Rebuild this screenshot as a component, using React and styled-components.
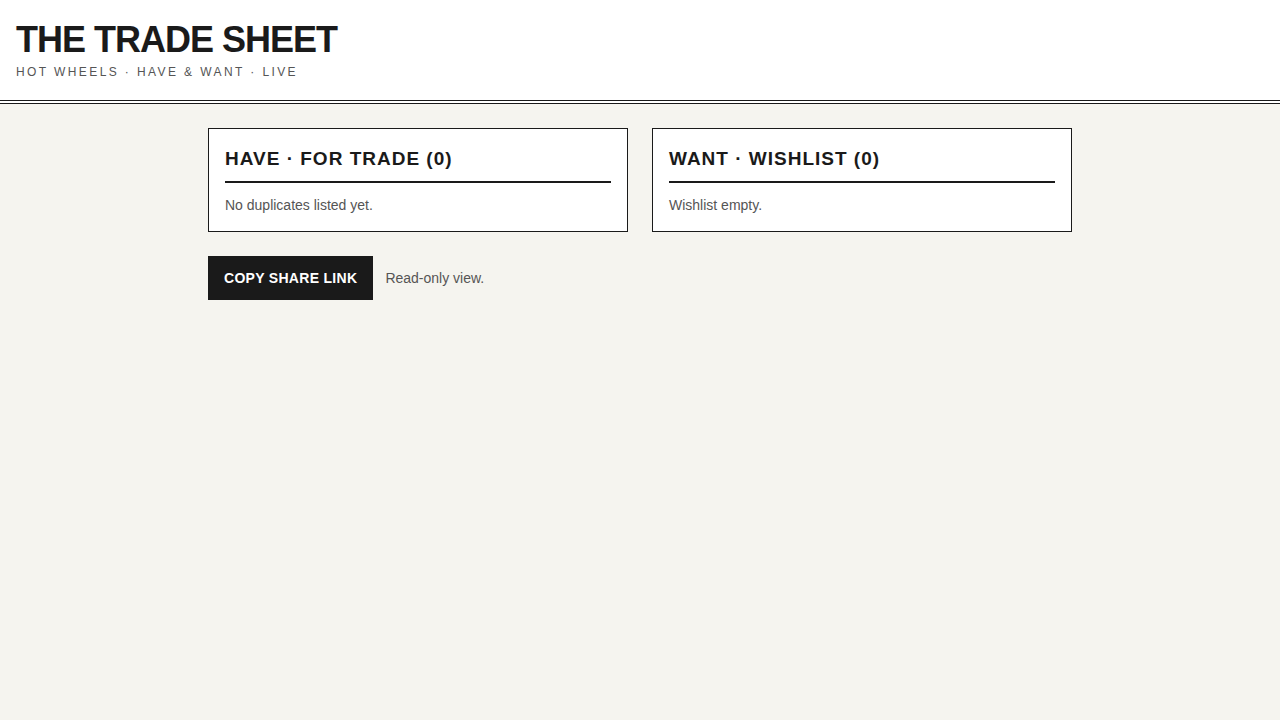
import React from "react";
import styled, { createGlobalStyle } from "styled-components";

const Global = createGlobalStyle`
  html, body {
    margin: 0;
    padding: 0;
    background: #f5f4ef;
    color: #1a1a1a;
    font-family: "Liberation Sans", Arial, sans-serif;
  }
  * { box-sizing: border-box; }
`;

const Header = styled.header`
  background: #fff;
  padding: 20px 16px 20px;
  border-bottom: 4px double #1a1a1a;
`;

const Title = styled.h1`
  margin: 0;
  font-size: 36px;
  line-height: 40px;
  font-weight: 700;
  letter-spacing: -1px;
`;

const Tagline = styled.div`
  margin-top: 4px;
  font-size: 12px;
  line-height: 16px;
  letter-spacing: 2.4px;
  color: #555;
`;

const Main = styled.main`
  width: 864px;
  margin: 0 auto;
  padding-top: 24px;
`;

const Columns = styled.div`
  display: grid;
  grid-template-columns: 1fr 1fr;
  gap: 24px;
`;

const Card = styled.section`
  background: #fff;
  border: 1px solid #1a1a1a;
  padding: 16px;
`;

const CardTitle = styled.h2`
  margin: 0 0 12px;
  padding-bottom: 8px;
  border-bottom: 2px solid #1a1a1a;
  font-size: 19px;
  line-height: 28px;
  font-weight: 700;
  letter-spacing: 1px;
`;

const Empty = styled.p`
  margin: 0;
  font-size: 14px;
  line-height: 20px;
  color: #555;
`;

const Actions = styled.div`
  display: flex;
  align-items: center;
  gap: 12px;
  margin-top: 24px;
`;

const Button = styled.button`
  height: 44px;
  padding: 0 16px;
  border: none;
  background: #1a1a1a;
  color: #fff;
  font-family: inherit;
  font-size: 14px;
  font-weight: 700;
  letter-spacing: 0.3px;
  cursor: pointer;
`;

const Note = styled.span`
  font-size: 14px;
  color: #555;
`;

const lists = [
  { title: "HAVE · FOR TRADE", items: [], empty: "No duplicates listed yet." },
  { title: "WANT · WISHLIST", items: [], empty: "Wishlist empty." },
];

export default function App() {
  return (
    <>
      <Global />
      <Header>
        <Title>THE TRADE SHEET</Title>
        <Tagline>HOT WHEELS · HAVE &amp; WANT · LIVE</Tagline>
      </Header>
      <Main>
        <Columns>
          {lists.map((l) => (
            <Card key={l.title}>
              <CardTitle>
                {l.title} ({l.items.length})
              </CardTitle>
              <Empty>{l.empty}</Empty>
            </Card>
          ))}
        </Columns>
        <Actions>
          <Button>COPY SHARE LINK</Button>
          <Note>Read-only view.</Note>
        </Actions>
      </Main>
    </>
  );
}
